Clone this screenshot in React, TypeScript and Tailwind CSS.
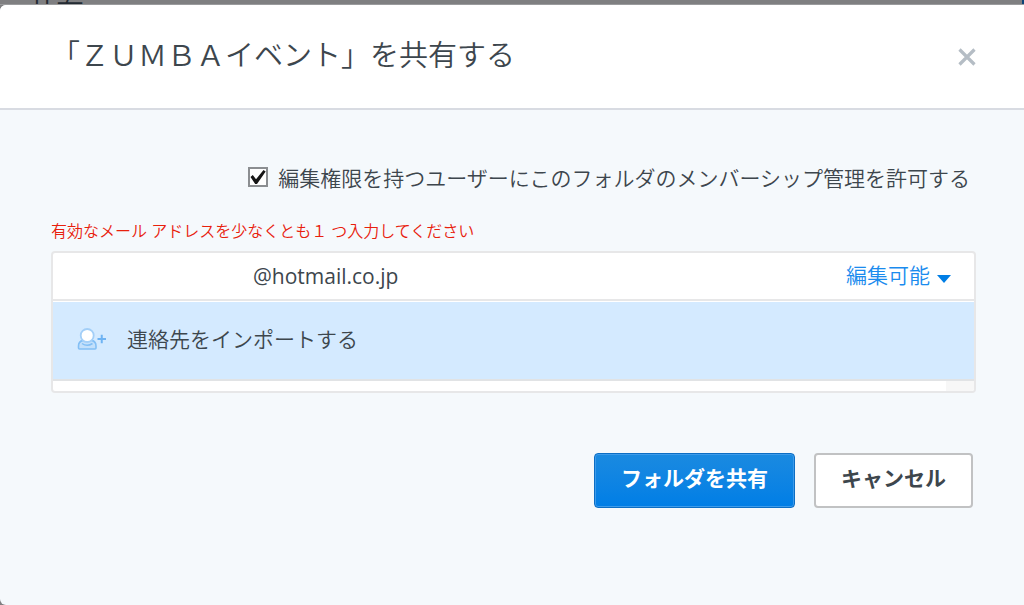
import { useState } from "react";

const permissions = ["編集可能", "閲覧可能"];

function ContactIcon() {
  return (
    <svg width="30" height="24" viewBox="0 0 30 24" fill="none" aria-hidden="true">
      <path
        d="M2.500 22h15.500q1 0 1-1v-2c0-3-1.800-5-4.300-5.600H6C3.500 14 1.500 16 1.500 19v2q0 1 1 1z"
        fill="#c3e0fb"
        stroke="#83bff5"
        strokeWidth="1.600"
      />
      <path d="M5 16.500q5 3.500 10.500 0" stroke="#83bff5" strokeWidth="1.500" />
      <circle cx="10.200" cy="8.500" r="6.500" fill="#fff" stroke="#a3cff8" strokeWidth="1.800" />
      <path d="M20.500 12h8.500M24.750 7.750v8.500" stroke="#6eb3f3" strokeWidth="2" />
    </svg>
  );
}

export default function App() {
  const [manage, setManage] = useState(true);
  const [email, setEmail] = useState("@hotmail.co.jp");

  return (
    <div className="flex min-h-screen flex-col bg-[#7f7f81] font-['Open_Sans','Noto_Sans_CJK_JP',sans-serif] text-[21px] leading-8 font-[350] text-[#3d464d]">
      {/* Page behind the dialog */}
      <div className="flex h-[5px] justify-between overflow-hidden border-b border-[#9a9b9d] pl-7">
        <p className="text-[28px] leading-6 text-[#232b33]">共有</p>
        <div className="w-0.5 bg-[#0b4478]" />
      </div>

      <div role="dialog" aria-labelledby="share-title" className="flex-1 overflow-hidden rounded-l-md bg-[#f5f9fc]">
        <header className="flex h-[105px] items-center justify-between border-b-2 border-[#d8dbe2] bg-white pr-12 pl-[51px]">
          <h1 id="share-title" className="pb-1 text-[29px] leading-10">「ＺＵＭＢＡイベント」を共有する</h1>
          <button type="button" aria-label="閉じる" className="p-0">
            <svg width="18" height="18" viewBox="0 0 18 18" aria-hidden="true">
              <path d="M1.500 1.500l15 15M16.500 1.500l-15 15" stroke="#b5bdc5" strokeWidth="3.200" />
            </svg>
          </button>
        </header>

        <form className="px-12 pt-[52px] pl-[51px]" onSubmit={(e) => e.preventDefault()}>
          <label className="flex items-center justify-end gap-2.5 pr-1.5">
            <span className="relative flex pb-0.5">
              <input
                type="checkbox"
                checked={manage}
                onChange={(e) => setManage(e.target.checked)}
                className="peer size-5 appearance-none border-2 border-[#8b8e91] bg-white"
              />
              <svg viewBox="0 0 20 20" className="pointer-events-none absolute top-0 left-0 hidden size-5 peer-checked:block" aria-hidden="true">
                <path d="M2.500 10l2.300-2 3.200 4.200L15.500 3l2.200 1.500L9 17H7.200z" fill="#161616" />
              </svg>
            </span>
            編集権限を持つユーザーにこのフォルダのメンバーシップ管理を許可する
          </label>

          <p className="mt-[25px] text-base leading-6 text-[#e8200c]">有効なメール アドレスを少なくとも１ つ入力してください</p>

          {/* Recipients */}
          <div className="mt-2 overflow-hidden rounded border-2 border-[#e7e7e8] bg-white">
            <div className="flex h-12 items-center border-b-2 border-[#e7e7e8]">
              <input
                type="text"
                aria-label="メールアドレス"
                value={email}
                onChange={(e) => setEmail(e.target.value)}
                className="min-w-0 flex-1 pl-[200px] font-normal outline-none"
              />
              <div className="relative mr-[23px] flex items-center">
                <select aria-label="権限" className="appearance-none pr-[21px] pb-0.5 text-[#1a8bee] outline-none">
                  {permissions.map((p) => (
                    <option key={p}>{p}</option>
                  ))}
                </select>
                <svg width="14" height="8" viewBox="0 0 14 8" className="pointer-events-none absolute right-0 bottom-2.5" aria-hidden="true">
                  <path d="M0 0h14L7 8z" fill="#007ee5" />
                </svg>
              </div>
            </div>
            <button type="button" className="flex h-20 w-full items-center gap-5 border-t border-b-2 border-t-white border-b-[#e1e3e5] bg-[#d4eaff] pb-1 pl-6 text-left">
              <ContactIcon />
              連絡先をインポートする
            </button>
            <div className="flex h-2.5 justify-end">
              <div className="w-7 bg-[#f7f7f7]" />
            </div>
          </div>

          <div className="mt-[60px] flex justify-end gap-[19px] pr-[3px] pb-24 font-bold">
            <button type="submit" className="h-[55px] rounded border border-[#0c6ec4] bg-linear-to-b from-[#1a8ae0] to-[#007ee6] px-[26px] pb-1.5 text-white inset-ring inset-ring-[#3d9bea]">
              フォルダを共有
            </button>
            <button type="button" className="h-[55px] rounded border-2 border-[#c1c2c3] bg-white px-[25px] pb-1.5">
              キャンセル
            </button>
          </div>
        </form>
      </div>
    </div>
  );
}
